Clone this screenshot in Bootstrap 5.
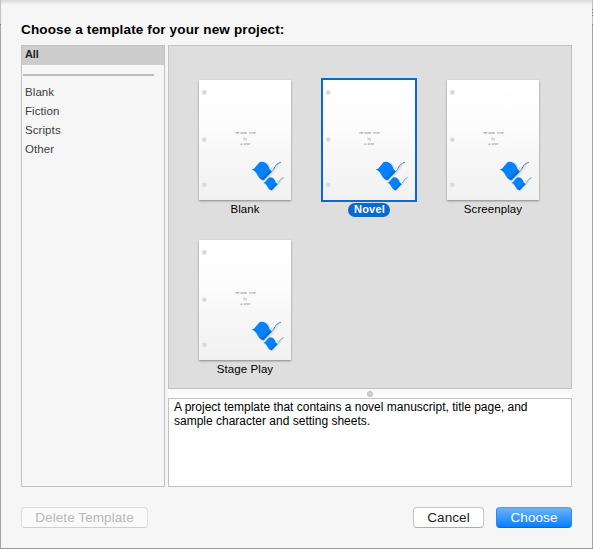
<!DOCTYPE html>
<html lang="en">
<head>
<meta charset="utf-8">
<title>Project Templates</title>
<meta name="viewport" content="width=device-width, initial-scale=1">
<link href="https://cdn.jsdelivr.net/npm/bootstrap@5.3.0/dist/css/bootstrap.min.css" rel="stylesheet">
<style>
html, body { height: 100%; }
body { font-family: "Liberation Sans", Arial, sans-serif; font-size: 11.5px; line-height: 13px; color: #000; background: #f6f6f6; }
.sheet { width: 593px; height: 549px; padding: 22px 21px 0 21px; border-bottom: 1px solid #999;
  background:
    linear-gradient(#c2c2c2 0 24px, #808080 24px 25px, #a4a4a4 25px) left / 1px 100% no-repeat,
    linear-gradient(#c2c2c2 0 9px, #777 9px 10px, #c2c2c2 10px 12px, #777 12px 13px, #c2c2c2 13px 15px, #777 15px 16px, #c2c2c2 16px 24px, #808080 24px 25px, #a4a4a4 25px) right / 1px 100% no-repeat,
    linear-gradient(#d9d9d9, #f6f6f6 5px); }
.sheet-title { font-size: 13.5px; line-height: 15px; height: 23px; font-weight: 700; letter-spacing: .14px; }
.panes { height: 442px; gap: 3px; }
.categories { width: 144px; border: 1px solid #c1c1c1; color: #3c3c3c; }
.category { height: 19px; padding: 3px 0 0 3px; letter-spacing: .08px; }
.category.chosen { background: #cdcdcd; color: #222; font-size: 11px; font-weight: 700; padding-top: 2px; letter-spacing: -.1px; }
.divider { height: 2px; margin: 9px 10px 7px 1px; background: #bdbdbd; }
.gallery { height: 344px; border: 1px solid #c1c1c1; background: #dedede; padding: 32px 0 0 14px; }
.tile { width: 124px; height: 160px; }
.thumb { width: 96px; height: 124px; padding: 2px; }
.thumb.chosen { background: #0869cf; }
.thumb svg { display: block; }
.thumb:not(.chosen) svg { box-shadow: 0 1px 2px rgba(0,0,0,.4); }
.tile-label { height: 15px; line-height: 14px; padding: 0 5px; letter-spacing: .08px; }
.tile-label.chosen { background: #0869cf; color: #fff; font-size: 11px; font-weight: 700; border-radius: 7px; height: 14px; margin-top: 1px; line-height: 13px; letter-spacing: .2px; padding: 0 5px 0 6px; }
.splitter { height: 9px; background: linear-gradient(#f8f8f8, #fff); }
.grip { width: 6px; height: 6px; background: #d2d2d2; border: 1px solid #bcbcbc; }
.description { border: 1px solid #c1c1c1; background: #fff; padding: 1px 5px; font-size: 12px; line-height: 14px; }
.footer-bar { padding-top: 20px; gap: 12px; }
.push { height: 21px; padding: 0; font-size: 13.5px; line-height: 19px; border-radius: 4px; border: 1px solid #c6c6c6; border-bottom-color: #adadad; background: #fff; color: #1c1c1c; letter-spacing: .08px; }
.push:disabled { opacity: 1; color: #b8b8b8; background: #fafafa; border-color: #dedede; border-bottom-color: #cfcfcf; width: 127px; }
.push-cancel { width: 71px; }
.push-choose { width: 76px; color: #fff; border-color: #4a9ff0 #2b87ee #0867e3; background: linear-gradient(#6cb3f6, #087eff); }
</style>
</head>
<body>
<svg width="0" height="0" class="position-absolute" aria-hidden="true">
  <defs>
    <linearGradient id="paper" x1="0" y1="0" x2="0" y2="1"><stop offset="0" stop-color="#fff"/><stop offset=".3" stop-color="#fdfdfd"/><stop offset="1" stop-color="#f1f1f1"/></linearGradient>
    <linearGradient id="cover" x1="0" y1="0" x2="1" y2="1"><stop offset=".6" stop-color="#0581fb"/><stop offset=".82" stop-color="#0867bd"/></linearGradient>
    <g id="book">
      <path d="M10 0Q17 .2 19 8Q22 3 28 1L22.500 9Q20 13 13 19.500L9 19Z" fill="#888" opacity=".2" transform="translate(.7 .8)"/>
      <path d="M10 0C14 -1.500 18.500 -1 20 5L21.500 4Q24 1 28.500 .5Q23 4 21 10L18 10Z" fill="#fff"/>
      <path d="M0 8.300L2.500 7.300L8 .7Q12.500 -.2 15 2.400Q17.300 4.600 18 8L20.500 10.300L12.300 18.800Q9.300 19.200 7.200 16.200L4.300 11.500Q2.500 9 0 8.300Z" fill="url(#cover)"/>
      <path d="M15 1.200Q17.800 3.500 18.800 8M20.500 5L19.300 8.200" fill="none" stroke="#b5b5b5" stroke-width=".6"/>
      <path d="M20 10C23 8.500 22.500 2.500 29.200 1" fill="none" stroke="#2f84d4" stroke-width="1"/>
    </g>
    <g id="page">
      <rect width="92" height="120" fill="url(#paper)"/>
      <g fill="#dadada"><circle cx="5.300" cy="12.400" r="2.300"/><circle cx="5.300" cy="59.700" r="2.300"/><circle cx="5.300" cy="104.700" r="2.300"/></g>
      <g fill="#8b8b8b" font-family="Liberation Mono, monospace" font-size="2.900" text-anchor="middle"><text x="46.300" y="54.300" textLength="21">THE NOVEL TITLE</text><text x="46.300" y="59.800">by</text><text x="46.300" y="65.300" textLength="10">A. Write</text></g>
      <use href="#book" x="52.700" y="81.300"/>
      <use href="#book" transform="translate(64.300 97) scale(.7)"/>
    </g>
  </defs>
</svg>
<main class="sheet">
  <h1 class="sheet-title m-0">Choose a template for your new project:</h1>
  <div class="panes d-flex">
    <nav class="categories flex-shrink-0">
      <div class="category chosen">All</div>
      <div class="divider"></div>
      <div class="category">Blank</div>
      <div class="category">Fiction</div>
      <div class="category">Scripts</div>
      <div class="category">Other</div>
    </nav>
    <div class="d-flex flex-column flex-grow-1">
      <section class="gallery d-flex flex-wrap align-content-start flex-shrink-0">
        <div class="tile d-flex flex-column align-items-center"><div class="thumb"><svg width="92" height="120"><use href="#page"/></svg></div><div class="tile-label">Blank</div></div>
        <div class="tile d-flex flex-column align-items-center"><div class="thumb chosen"><svg width="92" height="120"><use href="#page"/></svg></div><div class="tile-label chosen">Novel</div></div>
        <div class="tile d-flex flex-column align-items-center"><div class="thumb"><svg width="92" height="120"><use href="#page"/></svg></div><div class="tile-label">Screenplay</div></div>
        <div class="tile d-flex flex-column align-items-center"><div class="thumb"><svg width="92" height="120"><use href="#page"/></svg></div><div class="tile-label">Stage Play</div></div>
      </section>
      <div class="splitter d-flex align-items-center justify-content-center flex-shrink-0"><span class="grip rounded-circle"></span></div>
      <section class="description flex-grow-1">A project template that contains a novel manuscript, title page, and<br>sample character and setting sheets.</section>
    </div>
  </div>
  <div class="footer-bar d-flex">
    <button class="btn push me-auto" disabled>Delete Template</button>
    <button class="btn push push-cancel">Cancel</button>
    <button class="btn push push-choose">Choose</button>
  </div>
</main>
<script src="https://cdn.jsdelivr.net/npm/bootstrap@5.3.0/dist/js/bootstrap.bundle.min.js"></script>
</body>
</html>
